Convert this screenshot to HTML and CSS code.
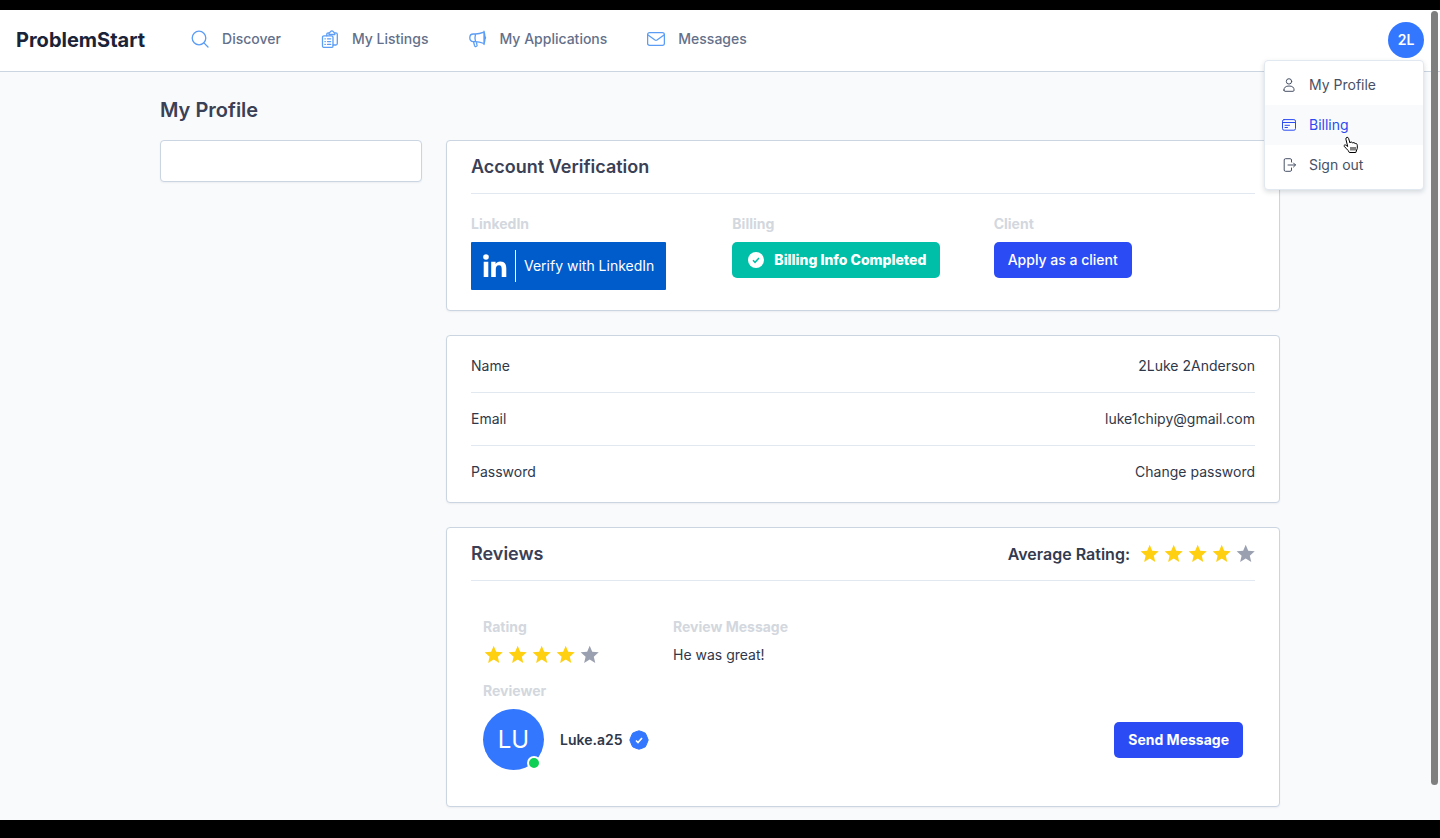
FILE: index.html
```html
<!DOCTYPE html>
<html lang="en">
<head>
<meta charset="utf-8">
<meta name="viewport" content="width=device-width, initial-scale=1">
<title>My Profile - ProblemStart</title>
<link rel="stylesheet" href="styles.css">
</head>
<body>
<svg class="sprite" aria-hidden="true">
  <symbol id="star" viewBox="-.7 0 20 20"><path d="M10 .8L12.530 6.820L19.040 7.360L14.090 11.630L15.580 17.990L10 14.600L4.420 17.990L5.910 11.630L.96 7.360L7.470 6.820z"/></symbol>
</svg>
<div class="screen">
  <header class="topbar">
    <a class="brand" href="#">ProblemStart</a>
    <nav class="nav" aria-label="Main">
      <a class="nav-link" href="#">
        <svg class="nav-icon" viewBox="0 0 18 18" aria-hidden="true"><circle cx="8" cy="8" r="6.8"/><path d="M12.900 12.900L17 17"/></svg>
        Discover
      </a>
      <a class="nav-link" href="#">
        <svg class="nav-icon" viewBox="0 0 18 18" aria-hidden="true"><rect x="1.500" y="5.800" width="10.500" height="11.600" rx="1.500"/><path d="M5.800 5.800V4.300Q5.800 2.800 7.300 2.800H8M13.800 2.800H14.800Q16.300 2.800 16.300 4.300V13.500Q16.300 15 14.800 15H12M8 4.500V2.800Q9 2.800 9.300 1.800Q10.900-.2 12.500 1.800Q12.800 2.800 13.800 2.800V4.500zM6.500 8.800H9.700M6.500 11.600H9.700M6.500 14.400H9.700M3.900 8.800H4.300M3.900 11.600H4.300M3.900 14.400H4.300"/></svg>
        My Listings
      </a>
      <a class="nav-link" href="#">
        <svg class="nav-icon" viewBox="0 0 18 18" aria-hidden="true"><path d="M15 2.200Q10 4 6.500 4H4.300Q.8 4 .8 7.800T4.300 11.600H6.500Q10 11.600 15 13.500M15 1.200Q17 8 15 14.500zM6.500 4Q5.500 7.800 6.500 11.600M4.500 11.600L5.500 15.500Q6 17 7 16.500L7.800 16Q8.400 15.500 7.900 14.500L7.300 11.600M15.700 6.200Q17.400 7.800 15.700 9.500"/></svg>
        My Applications
      </a>
      <a class="nav-link" href="#">
        <svg class="nav-icon" viewBox="0 0 18 18" aria-hidden="true"><rect x=".6" y="2.600" width="16.800" height="12.800" rx="2"/><path d="M1 5l7 5q1 .6 2 0l7-5"/></svg>
        Messages
      </a>
    </nav>
    <div class="account">
      <button class="avatar" type="button" aria-expanded="true" aria-label="Account menu, 2L">2L</button>
      <div class="menu">
        <a class="menu-item" href="#">
          <svg class="menu-icon" viewBox="0 0 14 14" aria-hidden="true"><circle cx="7" cy="3.400" r="2.700"/><path d="M1.900 12.100Q1.900 8 7 8T12.100 12.100Q12.100 13.300 11 13.300H3Q1.900 13.300 1.900 12.100z"/></svg>
          My Profile
        </a>
        <a class="menu-item menu-item-active" href="#">
          <svg class="menu-icon" viewBox="0 0 14 14" aria-hidden="true"><rect x=".5" y="1.600" width="13" height="10.600" rx="1.600"/><path d="M.5 4.500H13.500M3 7.300H7.500M3 9.500H5.500"/></svg>
          Billing
        </a>
        <a class="menu-item" href="#">
          <svg class="menu-icon" viewBox="0 0 14 14" aria-hidden="true"><path d="M9.500 4V2Q9.500.7 8.200.7H3.500Q2.200.7 2.200 2V12Q2.200 13.300 3.500 13.300H8.200Q9.500 13.300 9.500 12V10M6 7H13.500M11.500 5L13.500 7L11.500 9"/></svg>
          Sign out
        </a>
        <svg class="pointer" viewBox="0 0 16 18" aria-hidden="true"><path d="M4.700 10.500L2.900 3.200Q2.700 1.600 3.900 1.300T5.600 2.500L7 7Q7.200 5.900 8.300 6T9.700 7.200Q10 6.400 11 6.600T12.200 7.800Q12.600 7.200 13.400 7.600T14.300 9.200V12.300L12.800 16.500H6.300Q5.500 14.500 3.500 12.800L1.200 10.300Q.8 9.300 1.600 9T3.200 9.400z"/><path d="M8 11v3.500M10 11v3.500M12 11v3.500"/></svg>
      </div>
    </div>
  </header>

  <main class="page">
    <h1 class="page-title">My Profile</h1>
    <div class="columns">
      <aside class="card side" aria-label="Profile sections"></aside>
      <div class="content">
        <section class="card">
          <div class="card-head"><h2 class="card-title">Account Verification</h2></div>
          <div class="checks">
            <div class="check">
              <h3 class="label">LinkedIn</h3>
              <button class="linkedin" type="button">
                <svg class="linkedin-logo" viewBox="0 0 24 24" aria-hidden="true"><circle cx="3" cy="3" r="2.800"/><path d="M.7 7.800H5.300V23H.7zM8.200 7.800H12.600V9.900C13.400 8.500 15 7.400 17.400 7.400C22 7.400 23.300 10.300 23.300 14.400V23H18.700V15.300C18.700 13.300 18.400 11.300 16 11.300S12.800 13.200 12.800 15.200V23H8.200z"/></svg>
                <span class="linkedin-text">Verify with LinkedIn</span>
              </button>
            </div>
            <div class="check">
              <h3 class="label">Billing</h3>
              <button class="button button-done" type="button">
                <svg class="done-icon" viewBox="0 0 16 16" aria-hidden="true"><circle cx="8" cy="8" r="8"/><path d="M5 8.300l2 2 4-4.300"/></svg>
                Billing Info Completed
              </button>
            </div>
            <div class="check">
              <h3 class="label">Client</h3>
              <button class="button button-medium" type="button">Apply as a client</button>
            </div>
          </div>
        </section>

        <section class="card" aria-label="Account details">
          <dl class="details">
            <div class="detail"><dt>Name</dt><dd>2Luke 2Anderson</dd></div>
            <div class="detail"><dt>Email</dt><dd>luke1chipy@gmail.com</dd></div>
            <div class="detail"><dt>Password</dt><dd><a href="#">Change password</a></dd></div>
          </dl>
        </section>

        <section class="card">
          <div class="card-head">
            <h2 class="card-title">Reviews</h2>
            <div class="average">Average Rating:
              <span class="stars" role="img" aria-label="4 out of 5">
                <svg class="star"><use href="#star"/></svg><svg class="star"><use href="#star"/></svg><svg class="star"><use href="#star"/></svg><svg class="star"><use href="#star"/></svg><svg class="star star-off"><use href="#star"/></svg>
              </span>
            </div>
          </div>
          <article class="review">
            <div class="review-top">
              <div class="check">
                <h3 class="label">Rating</h3>
                <span class="stars" role="img" aria-label="4 out of 5">
                  <svg class="star"><use href="#star"/></svg><svg class="star"><use href="#star"/></svg><svg class="star"><use href="#star"/></svg><svg class="star"><use href="#star"/></svg><svg class="star star-off"><use href="#star"/></svg>
                </span>
              </div>
              <div class="check">
                <h3 class="label">Review Message</h3>
                <p class="message">He was great!</p>
              </div>
            </div>
            <div class="check">
              <h3 class="label">Reviewer</h3>
              <div class="reviewer">
                <span class="portrait">LU<span class="online"></span></span>
                <span class="reviewer-name">Luke.a25
                  <svg class="badge" viewBox="0 0 20 20" role="img" aria-label="Verified"><path class="badge-shape" d="M10 .8L13.200 1.800L16.400 3.200L17.900 6.600L19.200 10L17.900 13.400L16.400 16.800L13.200 18.200L10 19.200L6.800 18.200L3.600 16.800L2.100 13.400L.8 10L2.100 6.600L3.600 3.200L6.800 1.800z"/><path class="badge-tick" d="M7 10.500l2 2 4-4.500"/></svg>
                </span>
                <button class="button" type="button">Send Message</button>
              </div>
            </div>
          </article>
        </section>
      </div>
    </div>
  </main>
  <div class="scroll-thumb" aria-hidden="true"></div>
</div>
</body>
</html>
```
FILE: styles.css
```css
* { box-sizing: border-box; }

body {
  margin: 0;
  min-height: 100vh;
  padding: 10px 0 18px;
  display: flex;
  flex-direction: column;
  background: #000;
  color: #2f384a;
  font: 14px/20px Inter, "Liberation Sans", sans-serif;
}

h1, h2, h3, p, dl, dd { margin: 0; }
a { color: inherit; text-decoration: none; }
button { font: inherit; border: 0; padding: 0; cursor: pointer; }
svg { display: block; flex: none; }
.sprite { display: block; position: absolute; width: 0; height: 0; }

.screen {
  position: relative;
  flex: 1;
  background: #f8fafc;
}

/* Top bar */
.topbar {
  display: flex;
  align-items: center;
  height: 62px;
  padding: 0 16px 2px;
  background: #fff;
  border-bottom: 1px solid #cbd5e1;
}
.brand {
  margin-right: 46px;
  color: #1a2338;
  font-size: 20px;
  font-weight: 700;
}
.nav { display: flex; gap: 40px; padding-bottom: 2px; }
.nav-link {
  display: flex;
  align-items: center;
  gap: 13px;
  color: #64708a;
  font-weight: 500;
}
.nav-icon {
  width: 18px;
  height: 18px;
  fill: none;
  stroke: #5b9df5;
  stroke-width: 1.300;
  stroke-linecap: round;
  stroke-linejoin: round;
}
.account { position: relative; margin-left: auto; }
.avatar {
  display: block;
  width: 36px;
  height: 36px;
  border-radius: 50%;
  background: #3377ff;
  color: #fff;
  font-weight: 600;
}
.menu {
  position: absolute;
  z-index: 2;
  top: 38px;
  right: 0;
  width: 160px;
  padding: 4px 0;
  background: #fff;
  border: 1px solid #e2e8f0;
  border-radius: 4px;
  box-shadow: 0 2px 5px rgba(30, 41, 59, .16);
}
.menu-item {
  display: flex;
  align-items: center;
  gap: 13px;
  height: 40px;
  padding: 0 17px;
  color: #475166;
}
.menu-item-active { background: #f8fafc; color: #2b4bf2; }
.menu-icon {
  width: 14px;
  height: 14px;
  fill: none;
  stroke: currentColor;
  stroke-linecap: round;
  stroke-linejoin: round;
}
.pointer {
  position: absolute;
  top: 75px;
  left: 78px;
  width: 16px;
  height: 18px;
  fill: #fff;
  stroke: #000;
  stroke-linejoin: round;
}

/* Page */
.page {
  max-width: 1152px;
  margin: 0 auto;
  padding: 24px 16px 12px;
}
.page-title {
  margin-bottom: 16px;
  color: #3a4055;
  font-size: 20px;
  line-height: 28px;
  font-weight: 600;
}
.columns {
  display: grid;
  grid-template-columns: repeat(12, 1fr);
  gap: 24px;
  align-items: start;
}
.side { grid-column: span 3; min-height: 42px; }
.content {
  grid-column: span 9;
  display: flex;
  flex-direction: column;
  gap: 24px;
}
.card {
  padding: 0 24px;
  background: #fff;
  border: 1px solid #cbd5e1;
  border-radius: 4px;
  box-shadow: 0 1px 2px rgba(30, 41, 59, .06);
}
.card-head {
  display: flex;
  align-items: center;
  justify-content: space-between;
  height: 53px;
  border-bottom: 1px solid #e2e8f0;
}
.card-title {
  color: #3a4055;
  font-size: 18px;
  font-weight: 600;
}
.label {
  color: #d3d7de;
  font-size: 14px;
  font-weight: 700;
}

/* Verification */
.checks {
  display: grid;
  grid-template-columns: repeat(3, 1fr);
  padding: 20px 0;
}
.check { display: flex; flex-direction: column; align-items: flex-start; gap: 8px; }
.linkedin {
  display: flex;
  align-items: center;
  gap: 8px;
  height: 48px;
  padding: 0 12px;
  border-radius: 1px;
  background: #005bcb;
  color: #fff;
}
.linkedin-logo { width: 24px; height: 24px; fill: #fff; }
.linkedin-text {
  padding: 6px 0 6px 8px;
  border-left: 1px solid #fff;
}
.button {
  display: flex;
  align-items: center;
  gap: 10px;
  height: 36px;
  padding: 0 14px;
  border-radius: 5px;
  background: #2b4bf5;
  color: #fff;
  font-weight: 700;
}
.button-medium { font-weight: 500; }
.button-done { padding: 0 14px 0 16px; background: #00bfa8; font-weight: 800; }
.done-icon { width: 16px; height: 16px; fill: #fff; }
.done-icon path { fill: none; stroke: #00bfa8; stroke-width: 1.500; }

/* Account details */
.details { padding: 4px 0; }
.detail {
  display: flex;
  align-items: center;
  justify-content: space-between;
  height: 53px;
  border-bottom: 1px solid #e2e8f0;
}
.detail:last-child { height: 52px; border-bottom: 0; }

/* Reviews */
.average {
  display: flex;
  align-items: center;
  gap: 9px;
  color: #333b4e;
  font-size: 16px;
  font-weight: 600;
}
.stars { display: flex; gap: 4px; }
.star { width: 20px; height: 20px; fill: #ffd012; }
.star-off { fill: #9aa0b0; }
.review {
  display: flex;
  flex-direction: column;
  gap: 16px;
  padding: 36px 12px;
}
.review-top { display: grid; grid-template-columns: 1fr 3fr; }
.reviewer {
  display: flex;
  align-items: center;
  align-self: stretch;
  gap: 16px;
}
.reviewer .button { margin-left: auto; }
.portrait {
  position: relative;
  display: grid;
  place-items: center;
  width: 61px;
  height: 61px;
  border-radius: 50%;
  background: #3377ff;
  color: #fff;
  font-size: 24px;
}
.online {
  position: absolute;
  right: 3px;
  bottom: 0;
  width: 14px;
  height: 14px;
  border: 2px solid #fff;
  border-radius: 50%;
  background: #10cf55;
}
.reviewer-name {
  display: flex;
  align-items: center;
  gap: 7px;
  font-weight: 600;
}
.badge { width: 20px; height: 20px; }
.badge-shape { fill: #3377ff; stroke: #3377ff; stroke-linejoin: round; }
.badge-tick { fill: none; stroke: #fff; stroke-width: 1.600; }

/* Overlay scrollbar */
.scroll-thumb {
  position: absolute;
  top: 1px;
  right: 2px;
  bottom: 35px;
  width: 7px;
  border-radius: 4px;
  background: #7f7f7f;
}
```
